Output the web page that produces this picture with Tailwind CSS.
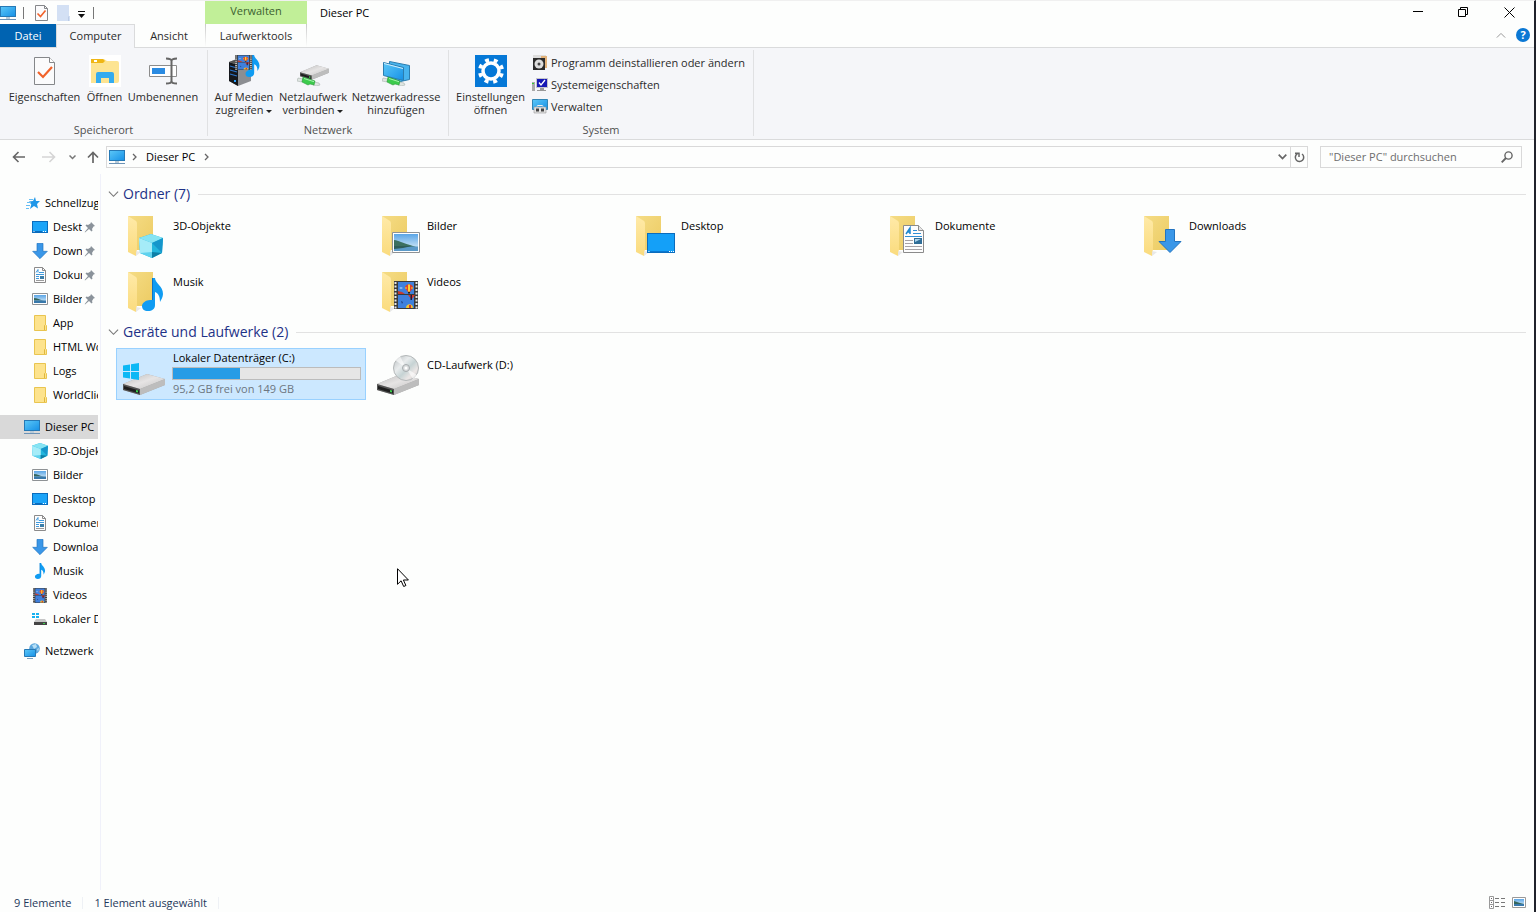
<!DOCTYPE html>
<html lang="de">
<head>
	<meta charset="UTF-8" />
	<meta name="viewport" content="width=device-width, initial-scale=1.0" />
	<title>Dieser PC</title>
	<script src="https://cdn.jsdelivr.net/npm/@tailwindcss/browser@4"></script>
</head>
<body class="bg-[#fdfefd] text-black font-['Open_Sans','Noto_Sans',sans-serif] text-[11px] leading-4">

	<!-- Icon sprite -->
	<svg width="0" height="0" class="absolute" aria-hidden="true">
		<defs>
			<linearGradient id="gBlue" x1="0" y1="0" x2="1" y2="1"><stop offset="0" stop-color="#5cc8f8" /><stop offset="1" stop-color="#1590e6" /></linearGradient>
			<linearGradient id="gBack" x1="0" y1="0" x2="1" y2="1"><stop offset="0" stop-color="#f5dc85" /><stop offset="1" stop-color="#eccb62" /></linearGradient>
			<linearGradient id="gFlap" x1="0" y1="0" x2="0" y2="1"><stop offset="0" stop-color="#ffeaa8" /><stop offset="1" stop-color="#fadb7d" /></linearGradient>
			<linearGradient id="gSky" x1="0" y1="0" x2="0" y2="1"><stop offset="0" stop-color="#5aa5e6" /><stop offset="1" stop-color="#e4f3fa" /></linearGradient>
			<linearGradient id="gTop" x1="0" y1="0" x2="1" y2="1"><stop offset="0" stop-color="#b9b9b9" /><stop offset=".5" stop-color="#e6e4e4" /><stop offset="1" stop-color="#c2c2c2" /></linearGradient>
			<linearGradient id="gDisc" x1="0" y1="0" x2="1" y2="1"><stop offset="0" stop-color="#b4babc" /><stop offset=".35" stop-color="#e9eced" /><stop offset=".55" stop-color="#c6d3d4" /><stop offset=".75" stop-color="#ece7e6" /><stop offset="1" stop-color="#b5b9ba" /></linearGradient>

			<symbol id="pc" viewBox="0 0 16 16">
				<rect x=".5" y="1.5" width="15" height="10" fill="url(#gBlue)" stroke="#2679b5" />
				<path d="M6 12h4v2H6z" fill="#b9cbd8" /><path d="M0 14.500h16" stroke="#6c92b5" />
			</symbol>
			<symbol id="folder" viewBox="0 0 48 48">
				<path d="M6 4h25v34H14z" fill="url(#gBack)" />
				<path d="M14 39l5 1-5 4z" fill="#c9c9c9" opacity=".4" />
				<path d="M6 4l8 5c1 1 1 2 1 4v25c-1 1-1 3-1 6l-8-4z" fill="url(#gFlap)" />
			</symbol>
			<symbol id="minifolder" viewBox="0 0 16 16">
				<path d="M2.500.5h11v9l1 1v5H2.500z" fill="#fde38d" stroke="#e9c550" />
				<path d="M12.500 15v-4.500l1-1" fill="none" stroke="#e0b73c" />
			</symbol>
			<symbol id="desktop" viewBox="0 0 28 20">
				<rect x=".5" y=".5" width="27" height="19" fill="#14a0f8" stroke="#0a6cbd" />
				<path d="M2 18.500h20" stroke="#0a78d0" /><path d="M22 18.500h1m1 0h1m1 0h1M1.500 18.500h1" stroke="#fff" />
			</symbol>
			<symbol id="minidesktop" viewBox="0 0 16 12">
				<rect x=".5" y=".5" width="15" height="11" fill="#1ba4f8" stroke="#0a6cbd" />
				<path d="M1 10.500h9" stroke="#0a6cbd" /><path d="M1.500 10.500h1M11 10.500h1m1 0h1" stroke="#fff" />
			</symbol>
			<symbol id="download" viewBox="0 0 24 24">
				<path d="M7.500.5h9v12h6.500L12 23.500 1 12.500h6.500z" fill="#3a97e8" stroke="#2374c0" />
			</symbol>
			<symbol id="doc" viewBox="0 0 21 28">
				<path d="M.5.5h15l5 5v22H.5z" fill="#fdfdfd" stroke="#8b8b8b" /><path d="M15.500.5v5h5" fill="#e6e6e6" stroke="#8b8b8b" />
				<path d="M3 9l4-6v6M4.500 7H7" fill="none" stroke="#1c86cf" stroke-width="1.500" />
				<path d="M10 5.500h4M10 8.500h8M2 11.500h17" stroke="#2e8fd6" />
				<path d="M2 15.500h8M2 18.500h8M2 21.500h17M2 24.500h17" stroke="#a6a2a6" />
				<path d="M11 13h8v6h-8z" fill="#2f6d97" /><path d="M12 14h6l-6 3z" fill="#a9d3ec" />
			</symbol>
			<symbol id="minidoc" viewBox="0 0 16 16">
				<path d="M2.500.5h8l3 3v12h-11z" fill="#fdfdfd" stroke="#8b8b8b" /><path d="M10.500.5v3h3" fill="none" stroke="#8b8b8b" />
				<path d="M4 5.500l2-3v3M7 5.500h5M4 7.500h8M4 9.500h3M4 11.500h3" fill="none" stroke="#3f9add" /><path d="M8 9h4v3H8z" fill="#3c7ea8" /><path d="M4 13.500h8" stroke="#9b9b9b" />
			</symbol>
			<symbol id="picture" viewBox="0 0 28 21" preserveAspectRatio="none">
				<path d="M.5.5h27v20H.5z" fill="#fff" stroke="#8e9295" /><path d="M2 2h24v17H2z" fill="url(#gSky)" />
				<path d="M2 8c3 0 4 1 7 2s5 2 9 3l6 2H2z" fill="#3c7060" /><path d="M2 14.500h24V19H2z" fill="#5b9ac8" /><path d="M2 14h18l-9 2-9 1z" fill="#2f5d58" />
			</symbol>
			<symbol id="minipic" viewBox="0 0 16 16">
				<path d="M.5 2.500h15v11H.5z" fill="#fff" stroke="#8e9295" /><path d="M2 4h12v8H2z" fill="url(#gSky)" />
				<path d="M2 7c3 0 6 2 10 2.500H2z" fill="#35665c" /><path d="M2 9.500h12V12H2z" fill="#3979ab" />
			</symbol>
			<symbol id="music" viewBox="0 0 21 33">
				<path d="M10 0h3c0 5 8 8 8 16 0 3-2 6-3 8 0-6-2-9-5-10v13c0 4-3 6-7 6s-6-2-6-5 4-6 8-6h2z" fill="#109cf2" />
				<path d="M10 0h1v22h-1z" fill="#0b74c8" />
			</symbol>
			<symbol id="video" viewBox="0 0 24 28" preserveAspectRatio="none">
				<path d="M0 0h24v28H0z" fill="#3a3a3a" /><path d="M1.500 1v27M22.500 1v27" stroke="#e8e8e8" stroke-width="2" stroke-dasharray="2 1.500" />
				<path d="M4 1h16v12H4zM4 14h16v13H4z" fill="#3f80dc" />
				<path d="M4 10l4 1 3 2H4z" fill="#c53b2e" /><path d="M5 7l2-1 2 1-2 1z" fill="#9bc6f5" />
				<path d="M11 7c0-5 8-5 8 0l-3 4h-2z" fill="#e0402a" /><path d="M14 3.500h2v7h-2z" fill="#f6d434" /><path d="M11.500 6h1v2h-1zM17.500 6h1v2h-1z" fill="#f6d434" /><path d="M14 11h2v1.500h-2z" fill="#222" />
				<path d="M14 14h7l-3 4h-1z" fill="#d6392a" /><path d="M16.500 14h1.500v5h-1.500z" fill="#1c1c3c" /><path d="M12 27c0-5 7-5 7 0z" fill="#f2c62e" /><path d="M15 24h2v3h-2z" fill="#d6392a" /><path d="M7 20l2 1-1 2z" fill="#22407c" />
			</symbol>
			<symbol id="cube" viewBox="0 0 24 24">
				<path d="M12 0l12 4-1 15-10 5L1 19 0 4z" fill="#22b5dc" /><path d="M12 0l12 4-11 5L0 4z" fill="#86e4f3" />
				<path d="M0 4l13 5v15L1 19z" fill="#5fd2ee" /><path d="M13 9v9L1 19 0 4z" fill="#a5ecf8" /><path d="M13 9l11-5-1 15z" fill="#1596cb" /><path d="M13 18l10 1-10 5z" fill="#0d7fa6" />
			</symbol>
			<symbol id="drive" viewBox="0 0 42 21">
				<path d="M0 10L24 0l18 5v6L17 21 0 16z" fill="#a9a9a9" /><path d="M0 10L24 0l18 5-25 10z" fill="url(#gTop)" /><path d="M17 15l25-10v6L17 21z" fill="#bdbdbd" />
				<path d="M0 10l17 5v6L0 16z" fill="#555" /><path d="M1 12l15 4.500v3L1 15z" fill="#1e1e1e" /><path d="M13 16l2 .5v2l-2-.5z" fill="#3cd34a" />
			</symbol>
			<symbol id="cable" viewBox="0 0 24 10">
				<path d="M1 2l5 1-1 3-5-1zM17 6l5 1 1 2-4 1-3-1z" fill="#dfe5e2" stroke="#a9b3ae" stroke-width=".6" />
				<path d="M6 1l12 4-1 4-4-1-2 1-6-3z" fill="#3ccb4c" stroke="#2c9a3a" stroke-width=".6" /><path d="M7 2.500l10 3.200" stroke="#a5f3ac" />
			</symbol>
			<symbol id="winlogo" viewBox="0 0 16 17"><path d="M0 2.500l7-1V8H0zM8 1.300L16 0v8H8zM0 9h7v6.500l-7-1zM8 9h8v8l-8-1.300z" fill="#0cb8f5" /></symbol>
			<symbol id="pin" viewBox="0 0 12 12"><path d="M7 1l4 4-1.500.5L8 8l.5 1.500-1 1L5 8l-4 3.500L.7 11 4 7 1.500 4.500l1-1L4 4l2.500-1.500z" fill="#8b939b" /></symbol>
			<symbol id="checkdoc" viewBox="0 0 21 28">
				<path d="M.5.5h15l5 5v22H.5z" fill="#fbfbfc" stroke="#85878a" /><path d="M15.500.5v5h5" fill="#fff" stroke="#85878a" />
				<path d="M4 15l5 5 9-10" fill="none" stroke="#f1622a" stroke-width="2.200" />
			</symbol>
			<symbol id="minicheck" viewBox="0 0 13 16">
				<path d="M.5.5h9l3 3v12H.5z" fill="#fbfbfc" stroke="#85878a" /><path d="M9.500.5v3h3" fill="none" stroke="#85878a" />
				<path d="M2.500 8.500l3 3 5-6" fill="none" stroke="#f1622a" stroke-width="1.600" />
			</symbol>
			<symbol id="chev" viewBox="0 0 12 8"><path d="M1 1.500l5 5 5-5" fill="none" stroke="currentColor" stroke-width="1.200" /></symbol>
		</defs>
	</svg>

	<div class="min-h-screen flex flex-col border-t border-t-[#f0f0f0] border-r-2 border-r-[#20222b]">

		<!-- Title bar and tabs -->
		<header class="flex h-[46px]">
			<div class="w-[205px] shrink-0 flex flex-col">
				<div class="flex items-center h-[23px]">
					<svg class="size-4"><use href="#pc" /></svg>
					<span class="w-px h-3 bg-[#777] ml-[7px] mr-[11px]"></span>
					<button aria-label="Eigenschaften"><svg class="w-[13px] h-4"><use href="#minicheck" /></svg></button>
					<button aria-label="Neuer Ordner" class="ml-[9px]"><svg class="w-[13px] h-4" viewBox="0 0 13 16"><path d="M0 0h12v11l1 1v4H0z" fill="#d3e0f4" /><path d="M11.500 16v-4l1-1" fill="none" stroke="#bccce6" /></svg></button>
					<button aria-label="Symbolleiste anpassen" class="ml-2"><svg class="w-2 h-4" viewBox="0 0 8 16"><path d="M0 6.500h7" stroke="#111" /><path d="M0 9h7l-3.500 4z" fill="#111" /></svg></button>
					<span class="w-px h-3 bg-[#777] ml-[7px]"></span>
				</div>
				<div class="flex h-[23px]">
					<button class="w-14 bg-[#0063b1] text-white">Datei</button>
					<button class="relative z-10 w-[79px] h-6 pb-[2px] bg-[#f5f6f9] border border-b-0 border-[#dadbdc] text-[#2b2b2b]">Computer</button>
					<button class="w-[68px] text-[#2b2b2b]">Ansicht</button>
				</div>
			</div>
			<div class="w-[102px] shrink-0 flex flex-col">
				<div class="h-[23px] pb-[3px] flex items-center justify-center bg-[#c1ef98] text-[#3d6030]">Verwalten</div>
				<button class="h-[23px] text-[#2b2b2b] bg-[linear-gradient(#c8c8c8,#fdfefd),linear-gradient(#c8c8c8,#fdfefd)] bg-[length:1px_100%] bg-no-repeat bg-[position:left,right]">Laufwerktools</button>
			</div>
			<h1 class="ml-[13px] h-[23px] flex items-center">Dieser PC</h1>
			<div class="ml-auto flex flex-col">
				<div class="flex h-[23px]">
					<button aria-label="Minimieren" class="w-[46px] flex items-center justify-center"><svg class="w-[11px] h-[11px]" viewBox="0 0 11 11"><path d="M1 4.500h10" stroke="#000" /></svg></button>
					<button aria-label="Verkleinern" class="w-[46px] flex items-center justify-center"><svg class="w-[11px] h-[11px]" viewBox="0 0 11 11"><path d="M.5 2.500h7v7h-7zM2.500 2.500v-2h7v7h-2" fill="none" stroke="#000" /></svg></button>
					<button aria-label="Schließen" class="w-[46px] flex items-center justify-center mr-[2px]"><svg class="w-[11px] h-[11px]" viewBox="0 0 11 11"><path d="M.5.5l10 10M10.500.5l-10 10" stroke="#000" /></svg></button>
				</div>
				<div class="flex h-[22px] items-center justify-end gap-[10px] pr-1">
					<button aria-label="Menüband minimieren" class="text-[#999]"><svg class="w-[10px] h-[7px] rotate-180"><use href="#chev" /></svg></button>
					<button aria-label="Hilfe" class="size-[14px] rounded-full bg-[#0b78d4] text-white font-bold leading-[14px]">?</button>
				</div>
			</div>
		</header>

		<!-- Ribbon -->
		<section class="flex h-[93px] bg-[#f5f6f9] border-y border-[#dadbdc] pt-[2px] pb-[3px] leading-[13px] text-[#2b2b2b]">
			<div class="w-[208px] border-r border-[#e0e1e3] flex flex-col justify-between">
				<div class="flex gap-[5px] pl-2 pt-[5px]">
					<button class="w-[73px] flex flex-col items-center gap-[3px] whitespace-nowrap"><svg class="size-8" viewBox="0 0 32 32"><use href="#checkdoc" x="5" y="2" width="21" height="28" /></svg>Eigenschaften</button>
					<button class="w-[37px] flex flex-col items-center gap-[3px] whitespace-nowrap">
						<svg class="size-8" viewBox="0 0 32 32"><path d="M0 0h32v32H0z" fill="#fff" /><path d="M2 6h3V4h10l3 2h10q2 0 2 2v18q0 2-2 2H2z" fill="#fde492" /><path d="M2 4h12l2 2-2 2H2z" fill="#efb615" /><path d="M5 5h3v2H5z" fill="#fff" /><path d="M7 28V19q0-2 2-2h14q2 0 2 2v9h-5v-5h-8v5z" fill="#34abef" /></svg>Öffnen</button>
					<button class="w-[70px] flex flex-col items-center gap-[3px] whitespace-nowrap">
						<svg class="size-8" viewBox="0 0 32 32"><path d="M2.500 10.500h27v11h-27z" fill="#fff" stroke="#8c8c8c" /><path d="M5 13h13v6H5z" fill="#2b8be2" /><path d="M24.500 5v22M19 3.500c3 0 5.500 1 5.500 2.500 0-1.500 2.500-2.500 5.500-2.500M19 28.500c3 0 5.500-1 5.500-2.500 0 1.500 2.500 2.500 5.500 2.500" fill="none" stroke="#666" stroke-width="2" /></svg>Umbenennen</button>
				</div>
				<div class="text-center text-[#505050]">Speicherort</div>
			</div>
			<div class="w-[241px] border-r border-[#e0e1e3] flex flex-col justify-between">
				<div class="flex gap-[5px] pl-[6px] pt-[5px]">
					<button class="w-[60px] flex flex-col items-center gap-[3px] whitespace-nowrap">
						<svg class="size-8" viewBox="0 0 32 32"><path d="M1 7l8-3 14 2v20l-13 5-9-5z" fill="#8c8e92" /><path d="M1 7l9 3v21l-9-5z" fill="#15171b" /><path d="M1 7l8-3 14 2-13 4z" fill="#555" /><path d="M2 11l7 2M2 15l7 2M2 19l7 2" stroke="#2b73c8" stroke-width="1.200" /><path d="M6 25h2v2H6z" fill="#2ba0ff" /><use href="#video" x="7" y="0" width="17" height="15" /><use href="#music" x="17" y="0" width="15" height="22" /></svg>
						<span>Auf Medien<br />zugreifen <span class="inline-block border-x-[3px] border-t-[3px] border-x-transparent border-t-[#222] align-middle"></span></span></button>
					<button class="w-[68px] flex flex-col items-center gap-[3px] whitespace-nowrap">
						<svg class="size-8" viewBox="0 0 32 32"><use href="#drive" x="3" y="10" width="29" height="15" /><use href="#cable" x="0" y="21" width="24" height="10" /></svg>
						<span>Netzlaufwerk<br />verbinden <span class="inline-block border-x-[3px] border-t-[3px] border-x-transparent border-t-[#222] align-middle"></span></span></button>
					<button class="w-[88px] flex flex-col items-center gap-[3px] whitespace-nowrap">
						<svg class="size-8" viewBox="0 0 32 32"><path d="M9.500 6.500l20 4v14l-9 2-11-4z" fill="#48b4ee" stroke="#2c7daf" /><path d="M3.500 7.500l20 5v13l-20-5z" fill="url(#gBlue)" stroke="#2c7daf" /><path d="M4 8l19 5v1L4 9z" fill="#d3effc" /><use href="#cable" x="2" y="21" width="24" height="10" /></svg>
						<span>Netzwerkadresse<br />hinzufügen</span></button>
				</div>
				<div class="text-center text-[#505050]">Netzwerk</div>
			</div>
			<div class="w-[305px] border-r border-[#e0e1e3] flex flex-col justify-between">
				<div class="flex pl-[6px] pt-[5px]">
					<button class="w-[71px] flex flex-col items-center gap-[3px] whitespace-nowrap">
						<svg class="size-8" viewBox="0 0 32 32"><path d="M0 0h32v32H0z" fill="#0578d7" /><circle cx="16" cy="16" r="8" fill="none" stroke="#fff" stroke-width="3.500" /><circle cx="16" cy="16" r="11.200" fill="none" stroke="#fff" stroke-width="3.600" stroke-dasharray="3.900 4.896" stroke-dashoffset="-2.500" /></svg>
						<span>Einstellungen<br />öffnen</span></button>
					<div class="flex flex-col ml-[6px] -mt-1">
						<button class="flex items-center gap-[3px] h-[22px] whitespace-nowrap"><svg class="size-4" viewBox="0 0 16 16"><path d="M1 1h13v3H1z" fill="#ddd" /><path d="M9 2h6v12H9z" fill="#e2b27a" /><path d="M1 4h12v12H1z" fill="#2b2b2b" /><circle cx="7" cy="10" r="4.500" fill="#ddd" /><circle cx="7" cy="10" r="1.500" fill="#444" /></svg>Programm deinstallieren oder ändern</button>
						<button class="flex items-center gap-[3px] h-[22px] whitespace-nowrap"><svg class="size-4" viewBox="0 0 16 16"><path d="M0 6h3v9H0z" fill="#aaa" /><path d="M0 7h2v1H0z" fill="#3c3" /><path d="M4 2h12v10H4z" fill="#c4c4cc" /><path d="M5 3h10v8H5z" fill="#1517b4" /><path d="M7 6.500l2 2.500 4-5" fill="none" stroke="#fff" stroke-width="1.300" /><path d="M8 12h4v2h2v1H5v-1h3z" fill="#999" /></svg>Systemeigenschaften</button>
						<button class="flex items-center gap-[3px] h-[22px] whitespace-nowrap"><svg class="size-4" viewBox="0 0 16 16"><path d="M.5 1.500h15v10H.5z" fill="url(#gBlue)" stroke="#3185b5" /><path d="M5 8.500q0-1 1-1h4q1 0 1 1" fill="none" stroke="#eee" /><path d="M2 9h12v6H2z" fill="#e2e2e2" stroke="#999" stroke-width=".6" /><path d="M4 10.500h3v3H4zM9 10.500h3v3H9z" fill="#444" /></svg>Verwalten</button>
					</div>
				</div>
				<div class="text-center text-[#505050]">System</div>
			</div>
		</section>

		<!-- Address bar -->
		<div class="flex items-center h-[34px] pr-3 text-[#666]">
			<button aria-label="Zurück" class="ml-3"><svg class="w-[14px] h-3" viewBox="0 0 14 12"><path d="M13 6H1.500M6.500 1l-5 5 5 5" fill="none" stroke="#666" stroke-width="1.600" /></svg></button>
			<button aria-label="Vorwärts" class="ml-4"><svg class="w-[14px] h-3" viewBox="0 0 14 12"><path d="M0 6h12M7.500 1l5 5-5 5" fill="none" stroke="#d5d5d5" stroke-width="1.600" /></svg></button>
			<button aria-label="Zuletzt besucht" class="ml-[13px]"><svg class="w-[7px] h-[5px]" viewBox="0 0 7 5"><path d="M.5.5l3 3 3-3" fill="none" stroke="#777" stroke-width="1.500" /></svg></button>
			<button aria-label="Nach oben" class="ml-[11px]"><svg class="w-3 h-3" viewBox="0 0 12 12"><path d="M6 12V1.500M1 6.500l5-5 5 5" fill="none" stroke="#666" stroke-width="1.700" /></svg></button>
			<div class="ml-[7px] flex-1 flex items-center h-[22px] border border-[#d9d9d9]">
				<svg class="size-4 ml-[2px]"><use href="#pc" /></svg>
				<svg class="w-[5px] h-2 ml-[7px]" viewBox="0 0 5 8"><path d="M1 1l3 3-3 3" fill="none" stroke="#666" stroke-width="1.300" /></svg>
				<a href="#" class="ml-[9px] text-black">Dieser PC</a>
				<svg class="w-[5px] h-2 ml-[9px]" viewBox="0 0 5 8"><path d="M1 1l3 3-3 3" fill="none" stroke="#666" stroke-width="1.300" /></svg>
				<button aria-label="Verlauf" class="ml-auto mr-[3px]"><svg class="w-[9px] h-[6px]" viewBox="0 0 9 6"><path d="M.7.7l3.800 3.800L8.300.7" fill="none" stroke="#666" stroke-width="1.700" /></svg></button>
				<button aria-label="Aktualisieren" class="w-[17px] h-full border-l border-[#d9d9d9] flex items-center justify-center"><svg class="w-[11px] h-3" viewBox="0 0 11 12"><path d="M8 3a4.200 4.200 0 1 1-4.500-.3M5 6V2.200H1" fill="none" stroke="#666" stroke-width="1.500" /></svg></button>
			</div>
			<label class="ml-3 w-[202px] h-[22px] flex items-center border border-[#d9d9d9] px-2">
				<input type="text" aria-label="Suchen" placeholder="&quot;Dieser PC&quot; durchsuchen" class="flex-1 min-w-0 outline-none placeholder:text-[#6d6d6d]" />
				<svg class="size-3" viewBox="0 0 12 12"><circle cx="7.500" cy="4.500" r="3.600" fill="none" stroke="#666" stroke-width="1.400" /><path d="M5 7L.7 11.300" stroke="#666" stroke-width="1.900" /></svg>
			</label>
		</div>

		<div class="flex flex-1">
			<!-- Navigation pane -->
			<nav class="w-[101px] shrink-0 border-r border-[#f0f1fa] pt-[17px] pr-[2px] flex flex-col whitespace-nowrap">
				<a href="#" class="h-6 flex items-center gap-1 pl-[25px] overflow-hidden"><svg class="size-4 shrink-0" viewBox="0 0 16 16"><path d="M10 2l1 4 4 0-3 3 1 4.500-4-2.500-4 3 1.300-4.500L4 6.500l4-.5z" fill="#1f97e8" /><path d="M4 4.500h4M2 7.500h4M1 10.500h4M1 13.500h3" stroke="#65bdf3" /></svg>Schnellzugriff</a>
				<a href="#" class="h-6 flex items-center pl-8"><svg class="w-4 h-3 shrink-0 mr-[5px]"><use href="#minidesktop" /></svg><span class="w-[29px] overflow-hidden">Desktop</span><svg class="size-3 ml-[2px] shrink-0"><use href="#pin" /></svg></a>
				<a href="#" class="h-6 flex items-center pl-8"><svg class="size-4 shrink-0 mr-[5px]"><use href="#download" /></svg><span class="w-[29px] overflow-hidden">Downloads</span><svg class="size-3 ml-[2px] shrink-0"><use href="#pin" /></svg></a>
				<a href="#" class="h-6 flex items-center pl-8"><svg class="size-4 shrink-0 mr-[5px]"><use href="#minidoc" /></svg><span class="w-[29px] overflow-hidden">Dokumente</span><svg class="size-3 ml-[2px] shrink-0"><use href="#pin" /></svg></a>
				<a href="#" class="h-6 flex items-center pl-8"><svg class="size-4 shrink-0 mr-[5px]"><use href="#minipic" /></svg><span class="w-[29px] overflow-hidden">Bilder</span><svg class="size-3 ml-[2px] shrink-0"><use href="#pin" /></svg></a>
				<a href="#" class="h-6 flex items-center gap-[5px] pl-8 overflow-hidden"><svg class="size-4 shrink-0"><use href="#minifolder" /></svg>App</a>
				<a href="#" class="h-6 flex items-center gap-[5px] pl-8 overflow-hidden"><svg class="size-4 shrink-0"><use href="#minifolder" /></svg>HTML World</a>
				<a href="#" class="h-6 flex items-center gap-[5px] pl-8 overflow-hidden"><svg class="size-4 shrink-0"><use href="#minifolder" /></svg>Logs</a>
				<a href="#" class="h-6 flex items-center gap-[5px] pl-8 overflow-hidden"><svg class="size-4 shrink-0"><use href="#minifolder" /></svg>WorldClient</a>
				<a href="#" class="h-6 mt-2 flex items-center gap-[5px] pl-6 overflow-hidden bg-[#d9d9d9]"><svg class="size-4 shrink-0"><use href="#pc" /></svg>Dieser PC</a>
				<a href="#" class="h-6 flex items-center gap-[5px] pl-8 overflow-hidden"><svg class="size-4 shrink-0"><use href="#cube" /></svg>3D-Objekte</a>
				<a href="#" class="h-6 flex items-center gap-[5px] pl-8 overflow-hidden"><svg class="size-4 shrink-0"><use href="#minipic" /></svg>Bilder</a>
				<a href="#" class="h-6 flex items-center gap-[5px] pl-8 overflow-hidden"><svg class="w-4 h-3 shrink-0"><use href="#minidesktop" /></svg>Desktop</a>
				<a href="#" class="h-6 flex items-center gap-[5px] pl-8 overflow-hidden"><svg class="size-4 shrink-0"><use href="#minidoc" /></svg>Dokumente</a>
				<a href="#" class="h-6 flex items-center gap-[5px] pl-8 overflow-hidden"><svg class="size-4 shrink-0"><use href="#download" /></svg>Downloads</a>
				<a href="#" class="h-6 flex items-center gap-[5px] pl-8 overflow-hidden"><svg class="size-4 shrink-0"><use href="#music" /></svg>Musik</a>
				<a href="#" class="h-6 flex items-center gap-[5px] pl-8 overflow-hidden"><svg class="size-4 shrink-0" viewBox="0 0 16 16"><use href="#video" x="1" y="1" width="14" height="15" /></svg>Videos</a>
				<a href="#" class="h-6 flex items-center gap-[5px] pl-8 overflow-hidden"><svg class="size-4 shrink-0" viewBox="0 0 16 16"><path d="M0 2h3v2H0zM4 2h3v2H4zM0 5h3v2H0zM4 5h3v2H4z" fill="#17b1f0" /><path d="M4 8h9l2 3H2z" fill="#c6c6c6" /><path d="M2 11h13v3H2z" fill="#444" /><path d="M11 12h2v1h-2z" fill="#3cd34a" /></svg>Lokaler Datenträger</a>
				<a href="#" class="h-6 mt-2 flex items-center gap-[5px] pl-6 overflow-hidden"><svg class="size-4 shrink-0" viewBox="0 0 16 16"><circle cx="10.500" cy="5.500" r="5.300" fill="#5aa6dc" /><path d="M8 2l4-1 1 3-3 2zM13 6l2-1-1 4z" fill="#b7dff5" /><path d="M.5 6.500h11v7H.5z" fill="url(#gBlue)" stroke="#2679b5" /><path d="M3 15.500h6" stroke="#7ba0be" /></svg>Netzwerk</a>
			</nav>

			<!-- Content -->
			<main class="flex-1 pl-[7px] pr-2 pt-2">
				<h2 class="flex items-center h-6 mb-1 text-[14px] text-[#1e3287]"><svg class="w-[11px] h-2 mr-1 text-[#777]"><use href="#chev" /></svg>Ordner (7)<span class="flex-1 h-px bg-[#e2e2e2] ml-2"></span></h2>
				<div class="grid grid-cols-[repeat(auto-fill,250px)] gap-1 pl-2">
					<button class="h-[52px] flex gap-[3px] items-start px-[6px] pt-[2px] text-left"><svg class="size-12" viewBox="0 0 48 48"><use href="#folder" /><use href="#cube" x="17" y="22" width="24" height="24" /></svg><span class="pt-[6px]">3D-Objekte</span></button>
					<button class="h-[52px] flex gap-[3px] items-start px-[6px] pt-[2px] text-left"><svg class="size-12" viewBox="0 0 48 48"><use href="#folder" /><use href="#picture" x="16" y="20" width="28" height="21" /></svg><span class="pt-[6px]">Bilder</span></button>
					<button class="h-[52px] flex gap-[3px] items-start px-[6px] pt-[2px] text-left"><svg class="size-12" viewBox="0 0 48 48"><use href="#folder" /><use href="#desktop" x="17" y="21" width="28" height="20" /></svg><span class="pt-[6px]">Desktop</span></button>
					<button class="h-[52px] flex gap-[3px] items-start px-[6px] pt-[2px] text-left"><svg class="size-12" viewBox="0 0 48 48"><use href="#folder" /><use href="#doc" x="19" y="13" width="21" height="28" /></svg><span class="pt-[6px]">Dokumente</span></button>
					<button class="h-[52px] flex gap-[3px] items-start px-[6px] pt-[2px] text-left"><svg class="size-12" viewBox="0 0 48 48"><use href="#folder" /><use href="#download" x="20" y="17" width="24" height="24" /></svg><span class="pt-[6px]">Downloads</span></button>
					<button class="h-[52px] flex gap-[3px] items-start px-[6px] pt-[2px] text-left"><svg class="size-12" viewBox="0 0 48 48"><use href="#folder" /><use href="#music" x="20" y="10" width="21" height="33" /></svg><span class="pt-[6px]">Musik</span></button>
					<button class="h-[52px] flex gap-[3px] items-start px-[6px] pt-[2px] text-left"><svg class="size-12" viewBox="0 0 48 48"><use href="#folder" /><use href="#video" x="18" y="13" width="24" height="28" /></svg><span class="pt-[6px]">Videos</span></button>
				</div>

				<h2 class="flex items-center h-6 mt-[2px] mb-1 text-[14px] text-[#1e3287]"><svg class="w-[11px] h-2 mr-1 text-[#777]"><use href="#chev" /></svg>Geräte und Laufwerke (2)<span class="flex-1 h-px bg-[#e2e2e2] ml-2"></span></h2>
				<div class="grid grid-cols-[repeat(auto-fill,250px)] gap-1 pl-2">
					<button class="h-[52px] flex gap-[2px] items-start pl-[5px] pr-1 pt-px text-left bg-[#cce8ff] border border-[#99d1ff]">
						<svg class="size-12 shrink-0" viewBox="0 0 48 48"><use href="#drive" x="1" y="24" width="42" height="21" /><use href="#winlogo" x="1" y="13" width="16" height="17" /></svg>
						<span class="w-[189px] shrink-0 flex flex-col">
							<span class="pl-px">Lokaler Datenträger (C:)</span>
							<span class="h-[13px] my-px border border-[#bcbcbc] bg-[#e6e6e6] block"><span class="block h-full bg-[#279ce6]" style="width: 36%"></span></span>
							<span class="pl-px text-[#6d7680]">95,2 GB frei von 149 GB</span>
						</span>
					</button>
					<button class="h-[52px] flex gap-[3px] items-start px-[6px] pt-[2px] text-left">
						<svg class="size-12" viewBox="0 0 48 48"><use href="#drive" x="1" y="24" width="42" height="21" /><circle cx="30" cy="18" r="12.500" fill="url(#gDisc)" stroke="#b3b7b8" /><path d="M30 18L19 10a14 14 0 0 1 5-4zM30 18l11 7a13 13 0 0 1-4 4z" fill="#fff" opacity=".6" /><circle cx="30" cy="18" r="3.500" fill="#d9dcdd" stroke="#a6abad" /><circle cx="30" cy="18" r="1.500" fill="#fff" /></svg>
						<span class="pt-[7px]">CD-Laufwerk (D:)</span>
					</button>
				</div>
			</main>
		</div>

		<!-- Status bar -->
		<footer class="flex items-center h-[22px] pl-[14px] pr-2 pt-[3px] text-[#1e395b]">
			<span>9 Elemente</span>
			<span class="w-px h-3 bg-[#eef1f5] mx-[11px]"></span>
			<span>1 Element ausgewählt</span>
			<span class="w-px h-3 bg-[#eef1f5] ml-[11px]"></span>
			<button aria-label="Details" class="ml-auto"><svg class="w-4 h-[13px]" viewBox="0 0 16 13"><path d="M.5.5h4v12h-4zM.5 4.500h4M.5 8.500h4" fill="#fff" stroke="#999" /><path d="M2 2.500h1M2 6.500h1M2 10.500h1" stroke="#666" /><path d="M6 2.500h4m2 0h4M6 6.500h4m2 0h4M6 10.500h4m2 0h4" stroke="#777" /></svg></button>
			<button aria-label="Große Symbole" class="ml-[7px]"><svg class="w-[14px] h-[11px]" viewBox="0 0 14 11"><path d="M.5.5h13v10H.5z" fill="#fff" stroke="#999" /><path d="M2 2h10v7H2z" fill="url(#gSky)" /><path d="M2 4l6 2 4 1H2z" fill="#35665c" /><path d="M2 7h10v2H2z" fill="#3979ab" /></svg></button>
		</footer>
	</div>

	<!-- Mouse pointer -->
	<svg class="absolute left-[397px] top-[568px] w-3 h-[19px]" viewBox="0 0 12 19"><path d="M.5.7v15.600l3.600-3.500 2.600 5.700 2.200-1-2.500-5.500h5z" fill="#fff" stroke="#000" /></svg>
</body>
</html>
